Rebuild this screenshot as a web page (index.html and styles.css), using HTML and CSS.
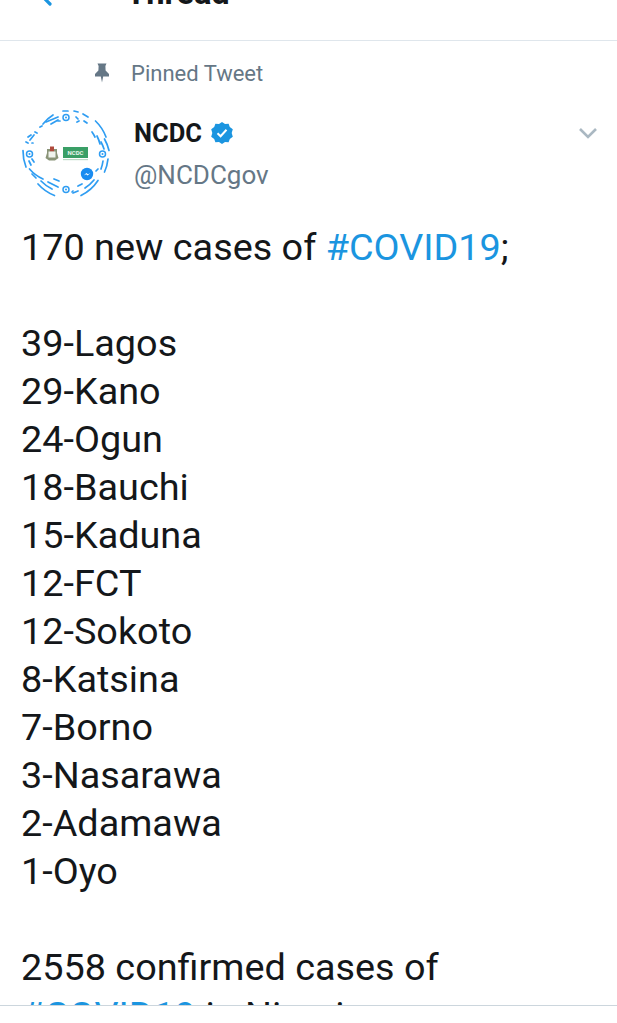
FILE: index.html
```html
<!DOCTYPE html>
<html lang="en">
<head>
<meta charset="utf-8">
<title>Thread</title>
<link rel="stylesheet" href="styles.css">
</head>
<body>
<header class="topbar">
  <svg class="back" width="20" height="12" viewBox="0 0 20 12"><path d="M0 -6 L10 4" fill="none" stroke="#1b95e0" stroke-width="3.2" stroke-linecap="round"/></svg>
  <h1 class="title">Thread</h1>
</header>
<main class="content">
  <div class="pinned">
    <svg class="pin" width="16" height="20" viewBox="0 0 16 20"><path d="M3.5 0.5 H12.5 L11.4 3 L11.6 7.5 L15 11 V13.5 H9.2 L8 19.5 L6.8 13.5 H1 V11 L4.4 7.5 L4.6 3 Z" fill="#657786"/></svg>
    <span class="pinned-label">Pinned Tweet</span>
  </div>
  <div class="author">
    <svg class="avatar" width="90" height="90" viewBox="0 0 90 90">
      <g fill="none" stroke="#2f9df2" stroke-width="1.7" stroke-linecap="round">
        <path d="M74.5 12 A43 43 0 0 1 85 28"/>
        <path d="M76 27 A40 40 0 0 1 79 35"/>
        <path d="M71 23 A38 38 0 0 1 74 28"/>
        <path d="M83.5 30 A43 43 0 0 1 88 41.5"/>
        <path d="M80 33 A38 38 0 0 1 83 40"/>
        <path d="M87 50 A43 43 0 0 1 83.5 63"/>
        <path d="M82 52 A38 38 0 0 1 80 60"/>
        <path d="M77 60 L75 62"/>
        <path d="M77 71.5 A43 43 0 0 1 60 86.5"/>
        <path d="M73 71 A38 38 0 0 1 64 79"/>
        <path d="M57 77 L61 75"/>
        <path d="M52 84 L57 82"/>
        <path d="M2 41.5 A43 43 0 0 0 5 58"/>
        <path d="M8 52 L10 56"/>
        <path d="M11 50 L13 53"/>
        <path d="M8.5 60 A38 38 0 0 0 22 70"/>
        <path d="M11 65 L15 69"/>
        <path d="M17 75 A43 43 0 0 0 33.5 86.5"/>
        <path d="M20 72 A40 40 0 0 0 31 80"/>
        <path d="M27 73 L37 78"/>
        <path d="M33 70 L38 72"/>
        <path d="M22 15 A38 38 0 0 1 32 6"/>
        <path d="M25 13 L37 8"/>
        <path d="M30 15 L37 11"/>
        <path d="M37 12 L39 12"/>
        <path d="M42 2 L47 2"/>
        <path d="M53 2 L57 3"/>
        <path d="M62 5 L67 8"/>
        <path d="M55 8 L57 10"/>
        <path d="M56 13 L58 12"/>
        <path d="M63 12 L66 14"/>
        <path d="M19 18 L21 17"/>
        <path d="M7 28 L10 26"/>
        <path d="M9 31 L13 26"/>
        <path d="M14 23 L16 24"/>
        <path d="M5 33 L7 34"/>
        <path d="M11 34 L12 34"/>
        <path d="M52 82 L51 83"/>
        <circle cx="45" cy="8.5" r="3" stroke-width="1.5"/>
        <circle cx="45" cy="80.5" r="3" stroke-width="1.5"/>
        <circle cx="8.5" cy="45" r="3" stroke-width="1.5"/>
        <circle cx="81.5" cy="45" r="3" stroke-width="1.5"/>
      </g>
      <g fill="#2f9df2">
        <circle cx="45" cy="8.5" r="1"/>
        <circle cx="45" cy="80.5" r="1"/>
        <circle cx="8.5" cy="45" r="1"/>
        <circle cx="81.5" cy="45" r="1"/>
      </g>
      <circle cx="66" cy="65" r="6.2" fill="#1a8cf0"/>
      <path d="M62.8 66.5 L65.3 64 L67 65.3 L69.3 64 L66.7 66.6 L65.1 65.2 Z" fill="#fff"/>
      <path d="M26 40 H36 V44 L37.5 49 L34 51.5 H28 L24.5 49 L26 44 Z" fill="#8a9478"/>
      <rect x="29" y="37.5" width="4" height="5" fill="#b04a3c"/>
      <rect x="27.5" y="42.5" width="7" height="6" fill="#f1f4ee"/>
      <rect x="42" y="38" width="25" height="11" fill="#3a9f66"/>
      <rect x="42" y="50" width="25" height="1.2" fill="#bcd9c6"/>
      <text class="logo-text" x="54.5" y="46">NCDC</text>
    </svg>
    <div class="names">
      <div class="name-row">
        <span class="name">NCDC</span>
        <svg class="badge" width="24" height="24" viewBox="0 0 24 24"><path d="M12 1 L15 3 L18.6 2.8 L19.8 6.1 L22.8 8.2 L21.7 12 L22.8 15.8 L19.8 17.9 L18.6 21.2 L15 21 L12 23 L9 21 L5.4 21.2 L4.2 17.9 L1.2 15.8 L2.3 12 L1.2 8.2 L4.2 6.1 L5.4 2.8 L9 3 Z" fill="#1b95e0"/><path d="M7.5 12.2 L10.6 15.2 L16.5 8.8" fill="none" stroke="#fff" stroke-width="2"/></svg>
      </div>
      <div class="handle">@NCDCgov</div>
    </div>
    <svg class="chevron" width="20" height="12" viewBox="0 0 20 12"><path d="M2 2 L10 10 L18 2" fill="none" stroke="#aab8c2" stroke-width="2.6"/></svg>
  </div>
  <div class="tweet">
    <p class="para">170 new cases of <a class="tag">#COVID19</a>;</p>
    <p class="para">39-Lagos<br>29-Kano<br>24-Ogun<br>18-Bauchi<br>15-Kaduna<br>12-FCT<br>12-Sokoto<br>8-Katsina<br>7-Borno<br>3-Nasarawa<br>2-Adamawa<br>1-Oyo</p>
    <p class="para">2558 confirmed cases of<br><a class="tag">#COVID19</a> in Nigeria</p>
  </div>
</main>
<footer class="bottombar"></footer>
</body>
</html>
```
FILE: styles.css
```css
html, body {
  margin: 0;
  height: 100%;
  background: #fff;
  overflow: hidden;
}
body {
  display: flex;
  flex-direction: column;
  height: 1023px;
  font-family: Roboto, "Noto Sans", sans-serif;
  color: #14171a;
}
.topbar {
  flex: 0 0 40px;
  height: 40px;
  box-sizing: content-box;
  border-bottom: 1px solid #dfe6ec;
  display: flex;
  align-items: flex-start;
  overflow: hidden;
}
.back {
  margin-left: 40px;
  flex: none;
}
.title {
  margin: -27px 0 0 66px;
  font-size: 32.7px;
  line-height: 40px;
  font-weight: 700;
  color: #14171a;
}
.content {
  flex: 1 1 auto;
  min-height: 0;
  overflow: hidden;
  padding-left: 21px;
  padding-right: 19px;
}
.pinned {
  display: flex;
  align-items: center;
  height: 26px;
  margin-top: 19px;
  padding-left: 73px;
}
.pin { flex: none; }
.pinned-label {
  margin-left: 21px;
  font-size: 22px;
  color: #657786;
}
.author {
  display: flex;
  align-items: flex-start;
  margin-top: 23px;
}
.avatar { flex: none; }
.logo-text {
  font-family: Roboto, sans-serif;
  font-size: 6px;
  font-weight: 700;
  fill: #e8f5ec;
  text-anchor: middle;
}
.names {
  margin-left: 23px;
  flex: 1;
}
.name-row {
  display: flex;
  align-items: center;
  height: 28px;
  margin-top: 10px;
}
.name {
  font-size: 25.5px;
  font-weight: 700;
  color: #14171a;
}
.badge {
  margin-left: 8px;
}
.handle {
  margin-top: 13px;
  font-size: 26px;
  line-height: 30px;
  color: #657786;
}
.chevron {
  flex: none;
  margin-top: 18px;
}
.tweet {
  margin-top: 24px;
  font-size: 37.8px;
  line-height: 48px;
  color: #14171a;
}
.para {
  margin: 0 0 48px;
}
.tag {
  color: #1b95e0;
}
.bottombar {
  flex: 0 0 17px;
  border-top: 1px solid #ccd6dd;
  background: #fff;
}
```
